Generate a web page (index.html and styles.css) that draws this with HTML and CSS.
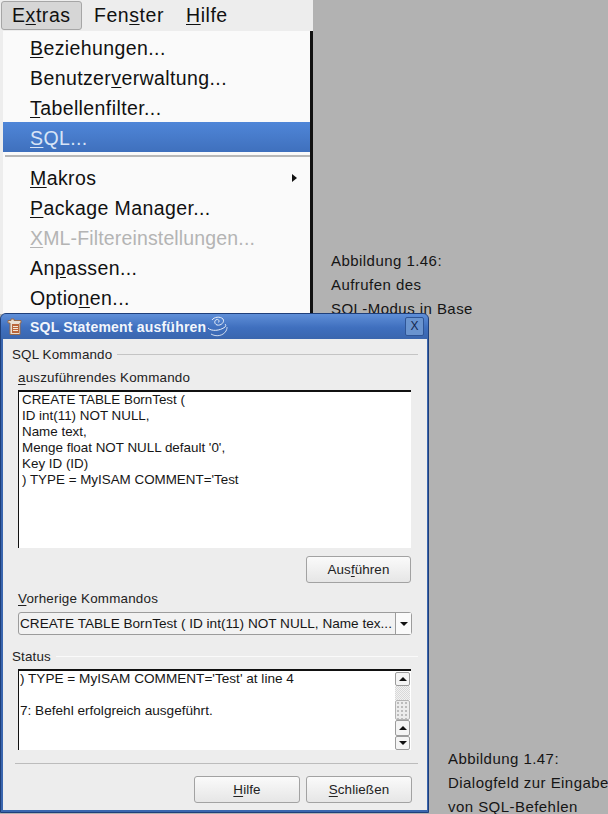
FILE: index.html
```html
<!DOCTYPE html>
<html lang="de">
<head>
<meta charset="utf-8">
<title>SQL Statement ausführen</title>
<link rel="stylesheet" href="styles.css">
</head>
<body>
<div class="canvas">
  <div class="menu-window">
    <div class="menubar">
      <span class="top-item active">E<u>x</u>tras</span>
      <span class="top-item">Fen<u>s</u>ter</span>
      <span class="top-item"><u>H</u>ilfe</span>
    </div>
    <div class="menu-panel">
      <div class="menu-item"><u>B</u>eziehungen...</div>
      <div class="menu-item">Benutzer<u>v</u>erwaltung...</div>
      <div class="menu-item"><u>T</u>abellenfilter...</div>
      <div class="menu-item selected"><u>S</u>QL...</div>
      <div class="menu-sep"></div>
      <div class="menu-item submenu"><span class="submenu-label"><u>M</u>akros</span><i class="arrow-right"></i></div>
      <div class="menu-item"><u>P</u>ackage Manager...</div>
      <div class="menu-item disabled"><u>X</u>ML-Filtereinstellungen...</div>
      <div class="menu-item">An<u>p</u>assen...</div>
      <div class="menu-item">Optio<u>n</u>en...</div>
    </div>
  </div>

  <div class="caption caption-a">Abbildung 1.46:<br>Aufrufen des<br>SQL-Modus in Base</div>
  <div class="caption caption-b">Abbildung 1.47:<br>Dialogfeld zur Eingabe<br>von SQL-Befehlen</div>

  <div class="dialog">
    <div class="titlebar">
      <svg class="app-icon" width="16" height="18" viewBox="0 0 16 18">
        <path d="M1 2.500h3V1h3v1.500h7V5h-1v11.500H3V5H1z" fill="#e9dfd2" stroke="#9a6a4a"/>
        <path d="M5 6h7v9H5z" fill="#b9653a"/>
        <path d="M6 8.500h5M6 10.500h5M6 12.500h5" stroke="#f3e6d6"/>
      </svg>
      <span class="title">SQL Statement ausführen</span>
      <svg class="swirl" width="21" height="23" viewBox="0 0 21 23" fill="none" stroke="#e6edf8">
        <path d="M1 13c3 3.500 12 3 17-1 1-1 1-2 0-3"/>
        <path d="M4 19c5 3 12 2 15-3 1-2 1-3 1-4" opacity=".85"/>
        <path d="M5 5c2-3 8-4 11-1 2 3-2 7-6 6-3-1-3-5 0-5.500 2 0 3 2 1 3"/>
      </svg>
      <span class="close-btn">X</span>
    </div>
    <div class="dialog-body">
      <div class="group-head first"><span>SQL Kommando</span><i></i></div>
      <div class="field-label"><u>a</u>uszuführendes Kommando</div>
      <div class="text-area command">CREATE TABLE BornTest (
ID int(11) NOT NULL,
Name text,
Menge float NOT NULL default '0',
Key ID (ID)
) TYPE = MyISAM COMMENT='Test</div>
      <div class="run-row"><span class="btn run">Aus<u>f</u>ühren</span></div>
      <div class="field-label prev"><u>V</u>orherige Kommandos</div>
      <div class="combo">
        <span class="combo-text">CREATE TABLE BornTest ( ID int(11) NOT NULL, Name tex...</span>
        <span class="combo-btn"><i class="arrow-down"></i></span>
      </div>
      <div class="group-head status"><span>Status</span><i></i></div>
      <div class="text-area status-area">
        <div class="status-text">) TYPE = MyISAM COMMENT='Test' at line 4

7: Befehl erfolgreich ausgeführt.</div>
        <div class="scrollbar">
          <span class="sb-btn end"><i class="arrow-up"></i></span>
          <span class="sb-track"></span>
          <span class="sb-thumb"></span>
          <span class="sb-btn"><i class="arrow-up"></i></span>
          <span class="sb-btn end"><i class="arrow-down"></i></span>
        </div>
      </div>
      <div class="footer-line"></div>
      <div class="footer">
        <span class="btn"><u>H</u>ilfe</span>
        <span class="btn"><u>S</u>chließen</span>
      </div>
    </div>
  </div>
</div>
</body>
</html>
```
FILE: styles.css
```css
html, body { margin: 0; padding: 0; }
body { background: #b2b2b2; font-family: "Liberation Sans", Arial, sans-serif; color: #111; }
.canvas { position: relative; width: 608px; height: 814px; overflow: hidden; background: #b2b2b2; }
u { text-underline-offset: 2px; }

/* menu */
.menu-window { position: absolute; left: 0; top: 0; width: 313px; height: 314px; display: flex; flex-direction: column; background: #ededed; }
.menubar { height: 31px; flex: none; background: #ededed; display: flex; align-items: center; font-size: 19.5px; letter-spacing: .55px; padding-left: 1px; box-sizing: border-box; }
.top-item { height: 29px; line-height: 29px; padding: 0 12px 0 10px; box-sizing: border-box; }
.top-item.active { width: 81px; background: #d6d6d6; border: 1px solid #a6a6a6; border-radius: 3px; line-height: 27px; margin-right: 2px; }
.menu-panel { flex: 1; margin-left: 3px; padding-top: 1px; background: #fafafa; border-right: 3px solid #111; font-size: 19.5px; letter-spacing: .4px; }
.menu-item { height: 30px; line-height: 33px; padding-left: 27px; padding-right: 13px; box-sizing: border-box; white-space: nowrap; overflow: hidden; }
.menu-item.selected { background: linear-gradient(#4f86d8, #3f70bd); color: #d8e4f6; }
.menu-item.disabled { color: #b4b4b4; letter-spacing: .15px; }
.menu-item.submenu { display: flex; justify-content: space-between; align-items: center; overflow: visible; }
.submenu-label { align-self: flex-start; }
.menu-sep { height: 7px; box-sizing: border-box; margin: 3px 0 0 2px; border-top: 2px solid #b8b8b8; width: 305px; }
.arrow-right { width: 0; height: 0; border-left: 5px solid #111; border-top: 4.5px solid transparent; border-bottom: 4.5px solid transparent; margin-top: 2px; }

/* captions */
.caption { position: absolute; font-size: 15px; line-height: 24px; letter-spacing: .45px; white-space: nowrap; color: #151515; }
.caption-a { left: 331px; top: 249px; }
.caption-b { left: 448px; top: 747px; }

/* dialog */
.dialog { position: absolute; left: 0; top: 313px; width: 429px; height: 500px; box-sizing: border-box; background: #3a66ae; border-radius: 6px 6px 0 0; border: 1px solid #1f3f7a; padding: 0 1px 2px 2px; display: flex; flex-direction: column; }
.titlebar { height: 25px; flex: none; display: flex; align-items: center; background: linear-gradient(#5f8fd8, #3f6fbe 55%, #3a66ae); margin: 0 -1px 0 -2px; padding: 0 4px 0 6px; border-radius: 5px 5px 0 0; }
.app-icon { flex: none; }
.title { color: #f2f6fc; font-weight: bold; font-size: 14px; margin-left: 7px; letter-spacing: .2px; white-space: nowrap; }
.swirl { flex: none; margin-left: 1px; }
.close-btn { margin-left: auto; width: 19px; height: 19px; box-sizing: border-box; border: 1px solid #2f5596; border-radius: 2px; background: #6a94cf; color: #14284f; font-size: 12px; line-height: 17px; text-align: center; }
.dialog-body { flex: 1; background: #ededed; display: flex; flex-direction: column; padding: 0 9px 0 9px; font-size: 13.4px; min-height: 0; color: #222; }
.group-head { display: flex; align-items: center; gap: 5px; height: 16px; letter-spacing: .15px; }
.group-head i { flex: 1; height: 1px; background: #c4c4c4; }
.group-head.first { margin-top: 7px; }
.group-head.status { margin-top: 13px; }
.group-head.status i { background: #fafafa; }
.field-label { height: 16px; line-height: 16px; margin: 8px 0 0 6px; letter-spacing: .2px; }
.text-area { margin: 5px 7px 0 6px; background: #fff; border-top: 2px solid #111; border-left: 1px solid #111; box-sizing: border-box; color: #161616; }
.command { height: 158px; margin-top: 4px; padding: 0 0 0 3px; line-height: 16px; white-space: pre; }
.run-row { display: flex; justify-content: flex-end; margin: 8px 7px 0 0; }
.btn { width: 106px; height: 27px; box-sizing: border-box; border: 1px solid #a2a2a2; border-radius: 3px; background: linear-gradient(#fafafa, #e6e6e6); text-align: center; line-height: 25px; font-size: 13.4px; letter-spacing: .1px; }
.btn.run { width: 105px; }
.field-label.prev { margin-top: 8px; }
.combo { display: flex; height: 23px; margin: 5px 6px 0 6px; box-sizing: border-box; border: 1px solid #9c9c9c; border-radius: 3px; background: #f2f2f2; }
.combo-text { flex: 1; line-height: 21px; padding-left: 1px; font-size: 13.6px; white-space: nowrap; overflow: hidden; color: #161616; }
.combo-btn { width: 15px; flex: none; border-left: 1px solid #9c9c9c; display: flex; align-items: center; justify-content: center; background: #fafafa; }
.arrow-down { width: 0; height: 0; border-top: 4px solid #111; border-left: 4px solid transparent; border-right: 4px solid transparent; }
.arrow-up { width: 0; height: 0; border-bottom: 4px solid #111; border-left: 4px solid transparent; border-right: 4px solid transparent; }
.status-area { height: 81px; display: flex; margin-top: 5px; overflow: hidden; }
.status-text { flex: 1; white-space: pre; line-height: 16px; padding: 0 0 0 1px; font-size: 13.6px; }
.scrollbar { width: 16px; flex: none; display: flex; flex-direction: column; padding-top: 1px; }
.sb-btn { height: 16px; flex: none; box-sizing: border-box; border: 1px solid #9c9c9c; border-radius: 2px; background: #f4f4f4; display: flex; align-items: center; justify-content: center; width: 15px; }
.sb-btn.end { height: 14px; }
.sb-track { height: 14px; flex: none; background: repeating-conic-gradient(#d8d8d8 0 25%, #f2f2f2 0 50%) 0 0 / 2px 2px; width: 15px; }
.sb-thumb { height: 20px; flex: none; box-sizing: border-box; border: 1px solid #b4b4b4; border-radius: 2px; background: radial-gradient(#bcbcbc 35%, transparent 40%) 0 0 / 4px 4px, #ececec; width: 15px; }
.footer-line { height: 1px; background: #bcbcbc; margin: 13px 0 0 3px; flex: none; }
.footer { display: flex; justify-content: flex-end; gap: 6px; margin: 12px 6px 0 0; }
```
